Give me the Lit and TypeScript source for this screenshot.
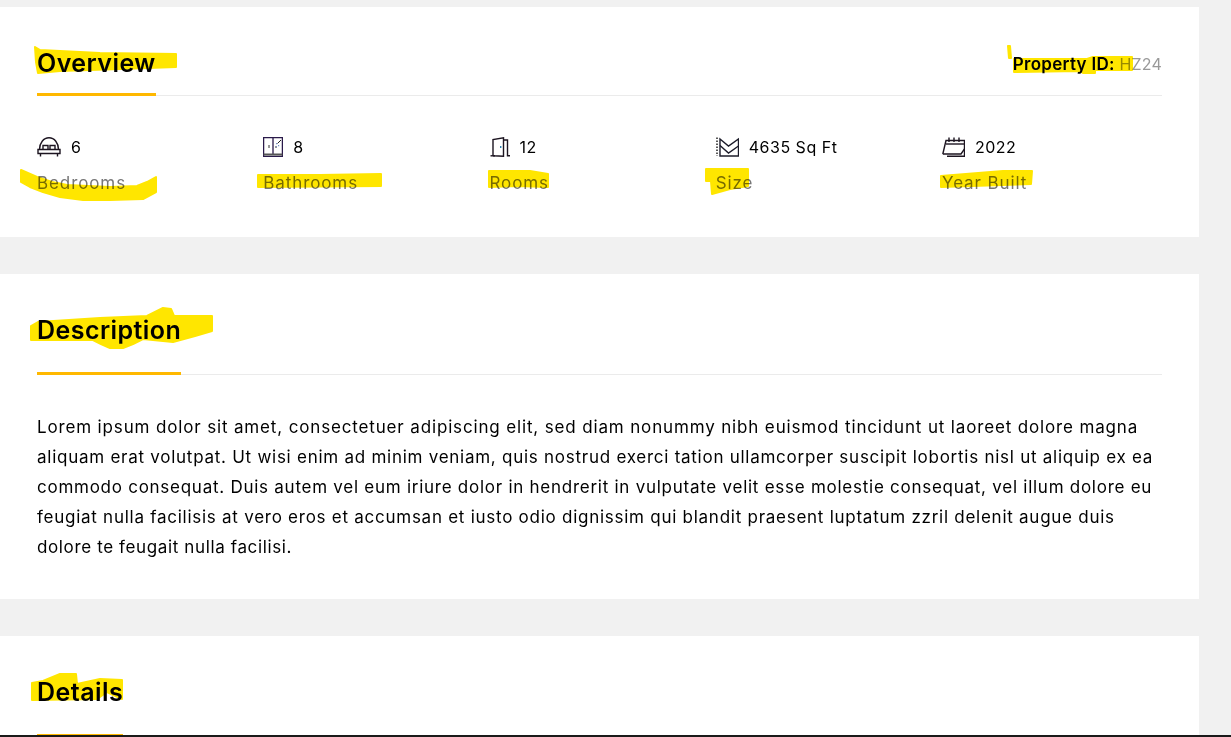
import { LitElement, html, css, svg } from "lit";
import { customElement } from "lit/decorators.js";

const strokes: string[] = [
  "35,47 40,50 100,53 176,54 176,67 120,69 60,71 38,73 36,62",
  "21,170 37,177 52,182 67,185 110,187 137,186 147,182 156,177 156,192 143,199 110,200 83,200 60,197 43,192 30,187 21,182",
  "258,175 320,175 381,174 381,186 258,187",
  "489,171 530,171 548,174 548,187 517,186 489,187",
  "706,169 748,169 748,186 730,189 712,194 711,181 706,181",
  "941,176 1003,171 1032,171 1031,184 941,187",
  "1008,46 1010,46 1011,58 1009,58",
  "1014,59 1087,59 1093,57 1132,57 1132,70 1095,70 1095,73 1083,73 1080,71 1014,72",
  "31,326 38,322 100,318 147,316 155,312 163,308 171,309 174,316 212,316 212,331 195,336 173,342 143,339 133,344 123,348 110,348 101,344 93,340 31,340",
  "32,683 43,681 60,674 76,674 77,684 100,679 122,680 122,699 107,692 97,699 32,700",
];

const bed = svg`<svg class="ic" width="24" height="20" viewBox="0 0 24 20"><g fill="none" stroke="#1c1420" stroke-width="1.400"><path d="M2.500 12.500C2.500 6 6.500 .8 12 .8S21.500 6 21.500 12.500"/><path d="M1 12.500H23V16.500H1Z"/><path d="M3.500 16.500V19.500M20.500 16.500V19.500"/><path d="M6 12.500V8.500H11V12.500M13 12.500V8.500H18V12.500"/></g></svg>`;
const bath = svg`<svg class="ic" width="20" height="20" viewBox="0 0 20 20"><g fill="none" stroke="#2a1a4a" stroke-width="1.300"><path d="M.6.6H19.400V19.400H.6Z"/><path d="M10 .6V17"/></g><path d="M.6 17.500H19.400" stroke="#555" stroke-width="2"/><path d="M6 8V11M13 9V11" stroke="#333"/><path d="M14.500 6.500L18 3" stroke="#222"/><path d="M13 6h1.200v1.200H13ZM15 8h1.200v1.200H15ZM13 9h1v1h-1Z" fill="#7a93c8"/></svg>`;
const door = svg`<svg class="ic" width="20" height="20" viewBox="0 0 20 20"><g fill="none" stroke="#1c1420" stroke-width="1.400"><path d="M.5 18.800H5"/><path d="M3 18.800V2.500L13.500.8V19.200L3 18.800"/><path d="M13.500 3H17.500V18.800H20"/></g><rect x="10" y="9" width="1.400" height="2" fill="#2a7fb0"/></svg>`;
const size = svg`<svg class="ic" width="23" height="20" viewBox="0 0 23 20"><path d="M1 .5V19" fill="none" stroke="#222" stroke-width="1.500" stroke-dasharray="1.500 1.500"/><g fill="none" stroke="#1c1c2a" stroke-width="1.400"><path d="M4 2L12.500 9L22.500 2V19H4Z"/><path d="M4 8.500L12.500 16L22.500 9"/></g></svg>`;
const cal = svg`<svg class="ic" width="23" height="20" viewBox="0 0 23 20"><g fill="none" stroke="#1c1420" stroke-width="1.400"><path d="M.8 17L4 3.500H22.500V19.300H5"/><path d="M.8 17H19L22.500 12"/><path d="M4 7H22.500"/><path d="M7 .5V5M12 .5V5M17 .5V5"/></g></svg>`;

const facts = [
  { icon: bed, value: "6", label: "Bedrooms" },
  { icon: bath, value: "8", label: "Bathrooms" },
  { icon: door, value: "12", label: "Rooms" },
  { icon: size, value: "4635 Sq Ft", label: "Size" },
  { icon: cal, value: "2022", label: "Year Built" },
];

@customElement("app-root")
export class AppRoot extends LitElement {
  static styles = css`
    :host {
      display: flex;
      flex-direction: column;
      position: relative;
      width: 1231px;
      height: 737px;
      overflow: hidden;
      background: #f1f1f1;
      color: #000;
      font-family: Inter, "Open Sans", sans-serif;
      font-size: 17px;
      letter-spacing: 0.74px;
    }
    .page {
      flex: 1;
      min-height: 0;
      overflow: hidden;
      padding-top: 7px;
      display: flex;
      flex-direction: column;
      gap: 37px;
    }
    .bar {
      height: 2px;
      background: #1a1a1a;
      flex: none;
    }
    .card {
      width: 1199px;
      box-sizing: border-box;
      padding: 36px 37px 0;
      background: #fff;
      flex: none;
    }
    .head {
      display: flex;
      justify-content: space-between;
      align-items: flex-end;
      border-bottom: 1px solid #ebebeb;
    }
    .title {
      margin: 0 0 -1px;
      font-size: 25px;
      line-height: 40px;
      font-weight: 600;
      letter-spacing: 0.45px;
      padding-bottom: 10px;
      border-bottom: 3px solid #ffb800;
    }
    .title.wide {
      padding-bottom: 22px;
    }
    .pid {
      line-height: 24px;
      margin-bottom: 19px;
      font-weight: 600;
      letter-spacing: 0.3px;
    }
    .pid span {
      font-size: 16px;
      font-weight: 400;
      letter-spacing: 0.2px;
      color: #999;
    }
    .facts {
      display: grid;
      grid-template-columns: repeat(5, 226.25px);
      padding: 39px 0 42px;
    }
    .top {
      display: flex;
      align-items: center;
      gap: 10px;
      height: 24px;
      font-size: 16px;
      letter-spacing: 0.5px;
    }
    .ic {
      display: block;
      flex: none;
    }
    .label {
      margin-top: 12px;
      line-height: 24px;
      color: #777;
      letter-spacing: 0.9px;
    }
    .text {
      margin: 0;
      padding: 37px 0;
      line-height: 30px;
      white-space: nowrap;
    }
    .first {
      letter-spacing: 0.85px;
    }
    .last {
      letter-spacing: 0.63px;
    }
    .marks {
      position: absolute;
      inset: 0;
      mix-blend-mode: multiply;
      pointer-events: none;
    }
    .marks polygon {
      fill: #ffe600;
      stroke: #ffe600;
      stroke-width: 2px;
      stroke-linejoin: round;
    }
  `;

  render() {
    return html`
      <div class="page">
        <section class="card">
          <div class="head">
            <h2 class="title">Overview</h2>
            <div class="pid">Property ID: <span>HZ24</span></div>
          </div>
          <div class="facts">
            ${facts.map(
              (f) => html`<div>
                <div class="top">${f.icon}<span>${f.value}</span></div>
                <div class="label">${f.label}</div>
              </div>`
            )}
          </div>
        </section>
        <section class="card">
          <div class="head"><h2 class="title wide">Description</h2></div>
          <p class="text">
            <span class="first">Lorem ipsum dolor sit amet, consectetuer adipiscing elit, sed diam nonummy nibh euismod tincidunt ut laoreet dolore magna</span><br />
            aliquam erat volutpat. Ut wisi enim ad minim veniam, quis nostrud exerci tation ullamcorper suscipit lobortis nisl ut aliquip ex ea<br />
            commodo consequat. Duis autem vel eum iriure dolor in hendrerit in vulputate velit esse molestie consequat, vel illum dolore eu<br />
            feugiat nulla facilisis at vero eros et accumsan et iusto odio dignissim qui blandit praesent luptatum zzril delenit augue duis<br />
            <span class="last">dolore te feugait nulla facilisi.</span>
          </p>
        </section>
        <section class="card">
          <div class="head"><h2 class="title wide">Details</h2></div>
        </section>
      </div>
      <div class="bar"></div>
      <svg class="marks" width="1231" height="737" viewBox="0 0 1231 737">
        ${strokes.map((p) => svg`<polygon points=${p}></polygon>`)}
      </svg>
    `;
  }
}
